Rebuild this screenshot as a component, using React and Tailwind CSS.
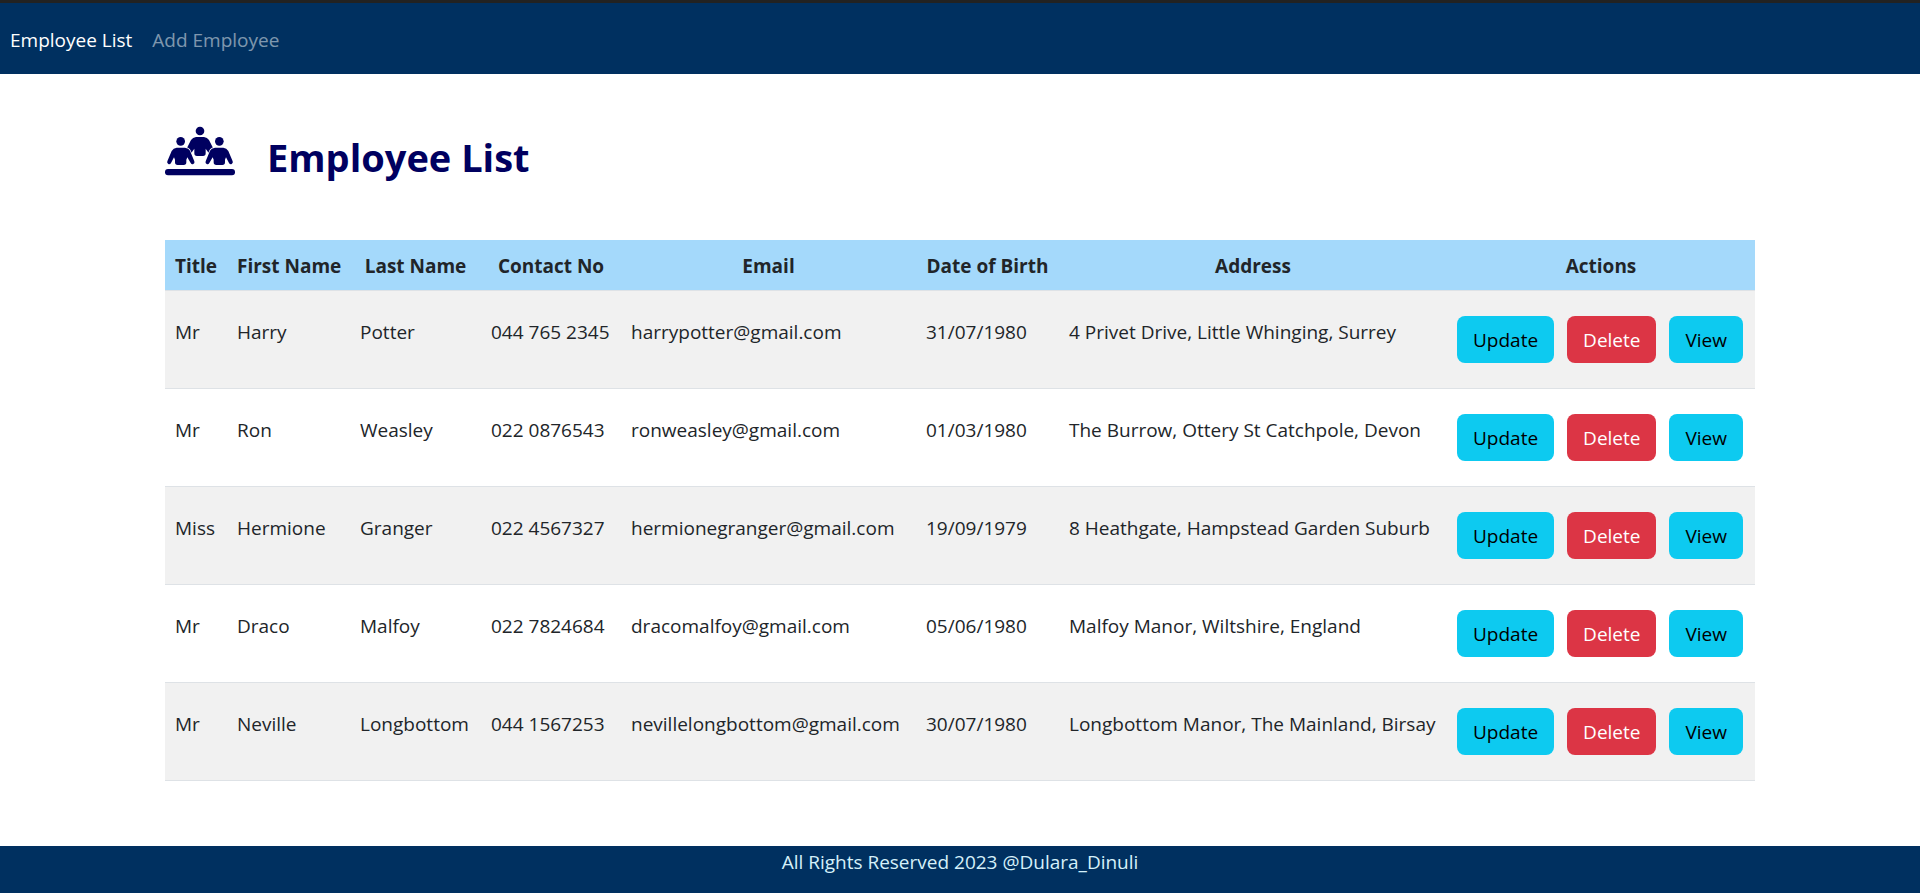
const employees = [
  { title: 'Mr', first: 'Harry', last: 'Potter', contact: '044 765 2345', email: 'harrypotter@gmail.com', dob: '31/07/1980', address: '4 Privet Drive, Little Whinging, Surrey' },
  { title: 'Mr', first: 'Ron', last: 'Weasley', contact: '022 0876543', email: 'ronweasley@gmail.com', dob: '01/03/1980', address: 'The Burrow, Ottery St Catchpole, Devon' },
  { title: 'Miss', first: 'Hermione', last: 'Granger', contact: '022 4567327', email: 'hermionegranger@gmail.com', dob: '19/09/1979', address: '8 Heathgate, Hampstead Garden Suburb' },
  { title: 'Mr', first: 'Draco', last: 'Malfoy', contact: '022 7824684', email: 'dracomalfoy@gmail.com', dob: '05/06/1980', address: 'Malfoy Manor, Wiltshire, England' },
  { title: 'Mr', first: 'Neville', last: 'Longbottom', contact: '044 1567253', email: 'nevillelongbottom@gmail.com', dob: '30/07/1980', address: 'Longbottom Manor, The Mainland, Birsay' },
];

const columns = [
  { label: 'Title', width: 'w-[62px]' },
  { label: 'First Name', width: 'w-[123px]' },
  { label: 'Last Name', width: 'w-[131px]' },
  { label: 'Contact No', width: 'w-[140px]' },
  { label: 'Email', width: 'w-[295px]' },
  { label: 'Date of Birth', width: 'w-[143px]' },
  { label: 'Address', width: 'w-[388px]' },
  { label: 'Actions', width: 'w-[308px]' },
];

function TeamIcon() {
  return (
    <svg viewBox="15 18 210 150" className="h-[50px] w-[70px] shrink-0" fill="currentColor" aria-hidden="true">
      <circle cx="120" cy="33" r="13" />
      <path d="M108 51H132Q142 52 147 60L164 94L154 106L144 96L137 86V100Q137 108 129 108H111Q103 108 103 100V86L96 96L86 106L76 94L93 60Q98 52 108 51Z" />
      <g stroke="white" strokeWidth="4" style={{ paintOrder: 'stroke' }}>
        <path d="M50 83H75Q86 84 90 92L103 124Q105 130 100 132Q95 134 92 129L82 112L79 119V127Q79 135 71 135H53Q45 135 45 127V119L42 112L33 129Q30 134 25 132Q20 129 22 124L35 93Q40 84 50 83Z" />
        <path d="M190 83H165Q154 84 150 92L137 124Q135 130 140 132Q145 134 148 129L158 112L161 119V127Q161 135 169 135H187Q195 135 195 127V119L198 112L207 129Q210 134 215 132Q220 129 218 124L205 93Q200 84 190 83Z" />
      </g>
      <circle cx="62" cy="64" r="13" />
      <circle cx="178" cy="64" r="13" />
      <rect x="15" y="147" width="210" height="19" rx="9" />
    </svg>
  );
}

function ActionButton({ children, tone }) {
  return (
    <button type="button" className={`h-[47px] rounded-lg px-4 leading-6 ${tone}`}>
      {children}
    </button>
  );
}

export default function App() {
  return (
    <div className="flex min-h-screen flex-col bg-white font-['Open_Sans','Noto_Sans',sans-serif] text-[19px] leading-[30px] text-[#212529]">
      <nav className="flex items-center border-t-[3px] border-[#222222] bg-[#003060] px-[10px] pt-[22px] pb-[19px]">
        <a href="#list" className="mr-5 text-white">Employee List</a>
        <a href="#add" className="text-white/50">Add Employee</a>
      </nav>

      <main className="mx-auto w-full max-w-[1650px] px-[30px] pb-16">
        <header className="flex items-center gap-8 pt-[47px] text-[#000060]">
          <TeamIcon />
          <h1 className="pt-3 text-[38px] leading-[48px] font-bold">Employee List</h1>
        </header>

        <table className="mt-[59px] w-full table-fixed border-collapse">
          <thead>
            <tr className="border-b border-[#dee2e6] bg-[#a4d9fb]">
              {columns.map((c) => (
                <th key={c.label} scope="col" className={`${c.width} px-[10px] pt-[11px] pb-[9px] text-center font-bold whitespace-nowrap`}>
                  {c.label}
                </th>
              ))}
            </tr>
          </thead>
          <tbody>
            {employees.map((e) => (
              <tr key={e.email} className="border-b border-[#dee2e6] align-top odd:bg-[#f1f1f1]">
                {[e.title, e.first, e.last, e.contact, e.email, e.dob, e.address].map((value, i) => (
                  <td key={i} className="px-[10px] pt-[26px] whitespace-nowrap">{value}</td>
                ))}
                <td className="px-[10px] py-[25px]">
                  <div className="flex gap-[13px]">
                    <ActionButton tone="bg-[#0dcaf0] text-black">Update</ActionButton>
                    <ActionButton tone="bg-[#dc3545] text-white">Delete</ActionButton>
                    <ActionButton tone="bg-[#0dcaf0] text-black">View</ActionButton>
                  </div>
                </td>
              </tr>
            ))}
          </tbody>
        </table>
      </main>

      <footer className="mt-auto bg-[#003060] pt-px pb-4 text-center text-[#d5f0fa]">
        All Rights Reserved 2023 @Dulara_Dinuli
      </footer>
    </div>
  );
}
